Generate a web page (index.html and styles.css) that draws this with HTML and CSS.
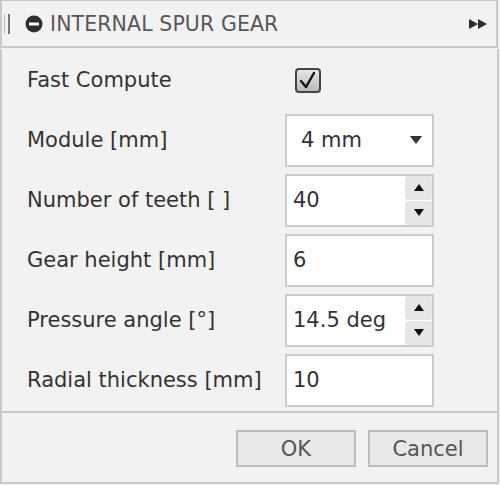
FILE: index.html
```html
<!DOCTYPE html>
<html>
<head>
<meta charset="utf-8">
<link rel="stylesheet" href="styles.css">
</head>
<body>
<div class="dialog">
  <div class="titlebar">
    <span class="grip"><span class="g1"></span><span class="g2"></span></span>
    <svg class="collapse" width="18" height="18" viewBox="0 0 18 18"><circle cx="9" cy="9" r="8.5" fill="#2e2e2e"/><rect x="4" y="7.5" width="10" height="3" fill="#fff"/></svg>
    <span class="title">INTERNAL SPUR GEAR</span>
    <svg class="ff" width="20" height="10" viewBox="0 0 20 10"><path d="M0 0 L9 5 L0 10 Z M9 0 L18 5 L9 10 Z" fill="#2b2b2b"/></svg>
  </div>
  <div class="body">
    <div class="row">
      <label class="lbl">Fast Compute</label>
      <div class="ctl"><span class="check"><svg width="22" height="21" viewBox="0 0 22 21"><path d="M4 11 L9 17 L17 3" fill="none" stroke="#111" stroke-width="2.4" stroke-linecap="round" stroke-linejoin="round"/></svg></span></div>
    </div>
    <div class="row">
      <label class="lbl">Module [mm]</label>
      <div class="ctl"><div class="box select"><span class="val">4 mm</span><svg width="12" height="8" viewBox="0 0 12 8"><path d="M0 0 H12 L6 8 Z" fill="#333"/></svg></div></div>
    </div>
    <div class="row">
      <label class="lbl">Number of teeth [ ]</label>
      <div class="ctl"><div class="box spin"><span class="val">40</span><div class="spins"><span class="sb"><svg width="10" height="7" viewBox="0 0 10 7"><path d="M0 7 H10 L5 0 Z" fill="#111"/></svg></span><span class="sb"><svg width="10" height="7" viewBox="0 0 10 7"><path d="M0 0 H10 L5 7 Z" fill="#111"/></svg></span></div></div></div>
    </div>
    <div class="row">
      <label class="lbl">Gear height [mm]</label>
      <div class="ctl"><div class="box"><span class="val">6</span></div></div>
    </div>
    <div class="row">
      <label class="lbl">Pressure angle [°]</label>
      <div class="ctl"><div class="box spin"><span class="val">14.5 deg</span><div class="spins"><span class="sb"><svg width="10" height="7" viewBox="0 0 10 7"><path d="M0 7 H10 L5 0 Z" fill="#111"/></svg></span><span class="sb"><svg width="10" height="7" viewBox="0 0 10 7"><path d="M0 0 H10 L5 7 Z" fill="#111"/></svg></span></div></div></div>
    </div>
    <div class="row">
      <label class="lbl">Radial thickness [mm]</label>
      <div class="ctl"><div class="box"><span class="val">10</span></div></div>
    </div>
  </div>
  <div class="footer">
    <button class="btn">OK</button>
    <button class="btn">Cancel</button>
  </div>
</div>
</body>
</html>
```
FILE: styles.css
```css
* { box-sizing: border-box; }
html, body { margin: 0; padding: 0; background: #f2f2f2; }
body { font-family: "DejaVu Sans", sans-serif; width: 500px; height: 485px; }
.dialog { display: flex; flex-direction: column; width: 500px; }
.titlebar {
  width: 498px; height: 48px;
  border: 2px solid #c9c9c9; border-top-width: 1px;
  display: flex; align-items: center;
  background: #f2f2f2;
}
.grip { display: flex; gap: 3px; margin-left: 2px; height: 20px; align-items: stretch; }
.g1 { width: 1px; background: #b8b8b8; }
.g2 { width: 2px; background: #777; }
.collapse { margin-left: 15px; }
.title { margin-left: 7px; font-size: 20.5px; color: #575757; letter-spacing: 0.1px; flex: 1; }
.ff { margin-right: 7px; }
.body {
  margin-top: 1px;
  width: 499px;
  border-left: 2px solid #c9c9c9; border-right: 2px solid #c9c9c9; border-bottom: 2px solid #c9c9c9;
  padding: 5px 0 5px 25px;
  display: flex; flex-direction: column; gap: 8px;
}
.row { display: flex; align-items: center; height: 52px; }
.lbl { width: 258px; font-size: 21px; color: #333; }
.ctl { display: flex; align-items: center; }
.check {
  margin-left: 10px; width: 26px; height: 25px;
  border: 2px solid #444; border-radius: 4px;
  background: linear-gradient(#e6e6e6, #b9b9b9);
  display: flex; align-items: center; justify-content: center;
}
.box {
  width: 149px; height: 53px;
  border: 2px solid #cbcbcb; background: #fff;
  display: flex; align-items: center;
  font-size: 21px; color: #333;
  padding-left: 6px;
}
.select { padding-left: 14px; padding-right: 10px; justify-content: space-between; }
.spin { padding-right: 0; }
.spin .val { flex: 1; }
.spins { display: flex; flex-direction: column; width: 27px; height: 100%; gap: 1px; }
.sb {
  flex: 1; background: #e6e6e6; border-radius: 3px;
  display: flex; align-items: center; justify-content: center;
}
.footer {
  width: 499px; height: 71px;
  border-left: 2px solid #c9c9c9; border-right: 2px solid #c9c9c9; border-bottom: 2px solid #c9c9c9;
  display: flex; justify-content: flex-end; align-items: center;
  gap: 12px; padding-right: 9px; padding-top: 2px;
}
.btn {
  width: 120px; height: 37px;
  border: 2px solid #bdbdbd; background: #e8e8e8;
  font-family: "DejaVu Sans", sans-serif; font-size: 21px; color: #555;
  padding: 0;
}
```
